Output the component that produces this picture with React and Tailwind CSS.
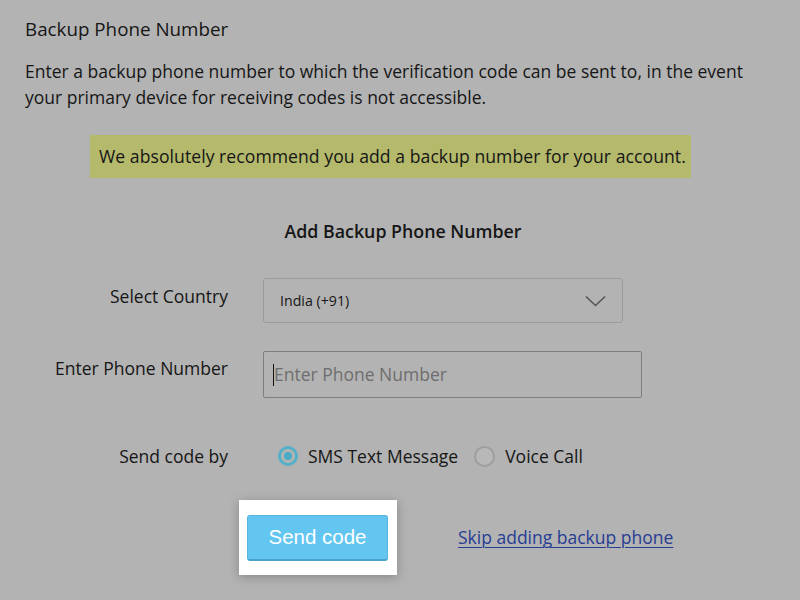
import React from "react";

export default function App() {
  return (
    <div className="w-[800px] h-[600px] bg-[#b3b3b3] font-['Open_Sans',sans-serif] text-[#161616] overflow-hidden">
      <div className="pl-[25px] pt-[17px]">
        <h1 className="text-[18.8px] leading-[24px]">Backup Phone Number</h1>
        <p className="mt-[17px] text-[17.5px] leading-[26px] whitespace-nowrap">
          Enter a backup phone number to which the verification code can be sent to, in the event
          <br />
          your primary device for receiving codes is not accessible.
        </p>
      </div>
      <div className="ml-[90px] mt-[25px] w-[601px] h-[43px] bg-[#b4b96c] flex items-center pl-[9px]">
        <span className="text-[17.6px] whitespace-nowrap tracking-[0.05px]">
          We absolutely recommend you add a backup number for your account.
        </span>
      </div>
      <div className="mt-[41px] text-center pl-[6px] text-[17.8px] leading-[24px] font-semibold">
        Add Backup Phone Number
      </div>

      <div className="mt-[35px] flex items-start">
        <div className="w-[228px] text-right pt-[6px] text-[17.5px] leading-[24px]">Select Country</div>
        <div className="ml-[35px] w-[360px] h-[45px] border border-[#9b9b9b] rounded-[3px] flex items-center justify-between pl-[16px] pr-[16px]">
          <span className="text-[14.2px]">India (+91)</span>
          <svg width="21" height="12" viewBox="0 0 21 12" fill="none">
            <path d="M1 1.5 L10.5 10.5 L20 1.5" stroke="#555" strokeWidth="1.6" />
          </svg>
        </div>
      </div>

      <div className="mt-[28px] flex items-start">
        <div className="w-[228px] text-right pt-[5px] text-[17.5px] leading-[24px]">Enter Phone Number</div>
        <div className="ml-[35px] w-[379px] h-[47px] border border-[#7e7e7e] rounded-[2px] flex items-center pl-[9px]">
          <span className="w-[1px] h-[22px] bg-[#111]" />
          <span className="text-[17.5px] text-[#6e6e6e]">Enter Phone Number</span>
        </div>
      </div>

      <div className="mt-[46px] flex items-center h-[24px]">
        <div className="w-[228px] text-right text-[17.5px] leading-[24px]">Send code by</div>
        <div className="ml-[50px] w-[20px] h-[20px] rounded-full border-[3px] border-[#52b0c8] flex items-center justify-center">
          <span className="w-[8px] h-[8px] rounded-full bg-[#4aaac4]" />
        </div>
        <span className="ml-[10px] text-[17.5px]">SMS Text Message</span>
        <div className="ml-[16px] w-[21px] h-[21px] rounded-full border-2 border-[#9e9e9e] bg-[#b8b8b8]" />
        <span className="ml-[10px] text-[17.5px]">Voice Call</span>
      </div>

      <div className="mt-[32px] flex items-center">
        <div className="ml-[239px] w-[158px] h-[75px] bg-white shadow-[0_2px_10px_rgba(0,0,0,0.25)] pl-[8px] pt-[15px]">
          <button className="w-[141px] h-[46px] bg-[#62c6f0] border border-[#58b6de] border-b-2 border-b-[#4aa3cb] rounded-[3px] text-white font-['Liberation_Sans',sans-serif] text-[20.5px]">
            Send code
          </button>
        </div>
        <a className="ml-[61px] text-[17.5px] text-[#263d94] underline underline-offset-[3px] decoration-1">
          Skip adding backup phone
        </a>
      </div>
    </div>
  );
}
